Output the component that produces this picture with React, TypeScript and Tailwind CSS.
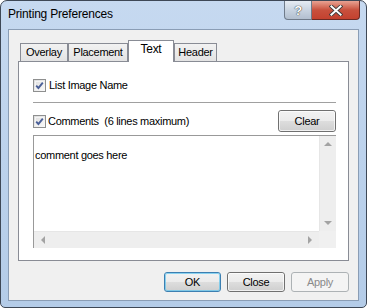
function Check() {
  return (
    <span className="relative flex size-[13px] shrink-0 items-center justify-center border border-[#8e8f8f] bg-gradient-to-br from-[#dcdcdc] to-[#fbfbfb]">
      <span className="absolute inset-[1px] border border-[#f4f4f4]" />
      <svg viewBox="0 0 11 11" className="relative size-[11px]">
        <path d="M2.2 5.6 L4.4 8 L8.8 2.6" fill="none" stroke="#4a5f98" strokeWidth="1.9" />
      </svg>
    </span>
  );
}

function Btn({ label, w, primary, disabled, h = "h-[20px]" }: { label: string; w: string; primary?: boolean; disabled?: boolean; h?: string }) {
  if (disabled) {
    return (
      <div className={`${w} ${h} flex items-center justify-center rounded-[3px] border border-[#adb2b5] bg-[#f4f4f4] text-[#8a8a8a]`}>
        {label}
      </div>
    );
  }
  return (
    <div
      className={`${w} ${h} relative flex items-center justify-center rounded-[3px] border ${
        primary ? "border-[#3c7fb1]" : "border-[#707070]"
      } bg-[linear-gradient(#f2f2f2_0%,#ebebeb_50%,#dddddd_51%,#cfcfcf_100%)] text-black`}
    >
      <span
        className={`absolute inset-0 rounded-[2px] border ${primary ? "border-[#5ec4f0]/70" : "border-white/70"}`}
      />
      <span className="relative">{label}</span>
    </div>
  );
}

function Tab({ label, w, active }: { label: string; w: string; active?: boolean }) {
  if (active) {
    return (
      <div className={`${w} relative z-10 -mb-px flex h-[22px] justify-center border border-b-0 border-[#898c95] bg-white pt-[2px] text-[12px]`}>
        {label}
      </div>
    );
  }
  return (
    <div className={`${w} flex h-[18px] justify-center border border-b-0 border-[#898c95] bg-gradient-to-b from-[#f2f2f2] to-[#e3e3e3] pt-[2px]`}>
      {label}
    </div>
  );
}

export default function App() {
  return (
    <div className="h-[308px] w-[367px] bg-white text-[11px] leading-[13px] tracking-[-0.3px] text-black [font-family:'Liberation_Sans',Arial,sans-serif]">
      <div className="relative flex h-[308px] w-[367px] flex-col rounded-t-[7px] rounded-b-[5px] border border-[#3e4856] bg-gradient-to-b from-[#c6d9f0] via-[#bcd2ec] to-[#b4cce8] px-[7px] pb-[6px]">
        {/* title bar */}
        <div className="flex h-[28px] items-center pb-[1px] text-[12px] tracking-[-0.2px] text-black">
          Printing Preferences
        </div>
        <div className="absolute right-[6px] top-0 flex h-[19px]">
          <div className="flex w-[28px] items-center justify-center rounded-bl-[4px] border border-t-0 border-[#6f7b8a] bg-gradient-to-b from-[#e6ecf3] via-[#c9d4e1] to-[#b2bfcf]">
            <span className="text-[13px] font-bold leading-none text-white [text-shadow:0_0_1px_#333,0_0_1px_#333]">?</span>
          </div>
          <div className="flex w-[48px] items-center justify-center rounded-br-[4px] border border-l-0 border-t-0 border-[#6b2a24] bg-gradient-to-b from-[#e8a293] via-[#c8503d] to-[#c3412f]">
            <svg viewBox="0 0 14 12" className="h-[11px] w-[14px]">
              <path d="M2 1.5 L12 10.5 M12 1.5 L2 10.5" stroke="#3b3b3b" strokeWidth="4" strokeLinecap="square" />
              <path d="M2 1.5 L12 10.5 M12 1.5 L2 10.5" stroke="#ffffff" strokeWidth="2.2" strokeLinecap="square" />
            </svg>
          </div>
        </div>

        {/* client area */}
        <div className="flex flex-1 flex-col border border-[#8a9db5] bg-[#f0f0f0] px-[9px] pt-[10px]">
          <div className="ml-[2px] flex items-end">
            <Tab label="Overlay" w="w-[48px]" />
            <Tab label="Placement" w="w-[60px]" />
            <Tab label="Text" w="w-[46px]" active />
            <Tab label="Header" w="w-[43px]" />
          </div>

          <div className="flex h-[200px] flex-col border border-[#898c95] bg-white pl-[14px] pr-[12px] pt-[17px]">
            <div className="flex h-[13px] items-center gap-[3px]">
              <Check />
              <span>List Image Name</span>
            </div>
            <div className="mt-[10px] h-px bg-[#a0a0a0]" />
            <div className="mt-[7px] flex h-[22px] items-center">
              <Check />
              <span className="ml-[2px] flex-1 whitespace-pre">Comments  (6 lines maximum)</span>
              <Btn label="Clear" w="w-[58px]" h="h-[22px]" />
            </div>
            <div className="mt-[3px] grid h-[113px] grid-cols-[1fr_17px] grid-rows-[1fr_17px] border-l border-t border-[#999999]">
              <div className="pl-[1px] pt-[13px]">comment goes here</div>
              <div className="flex flex-col items-center justify-between border-l border-[#e6e6e6] bg-[#eeeeee] py-[6px]">
                <span className="size-0 border-x-[4px] border-b-[4px] border-x-transparent border-b-[#a3a3a3]" />
                <span className="size-0 border-x-[4px] border-t-[4px] border-x-transparent border-t-[#a3a3a3]" />
              </div>
              <div className="flex items-center justify-between border-t border-[#e6e6e6] bg-[#eeeeee] px-[7px]">
                <span className="size-0 border-y-[4px] border-r-[4px] border-y-transparent border-r-[#a3a3a3]" />
                <span className="size-0 border-y-[4px] border-l-[4px] border-y-transparent border-l-[#a3a3a3]" />
              </div>
              <div className="bg-[#f0f0f0]" />
            </div>
          </div>

          <div className="mt-[11px] flex justify-end gap-[6px]">
            <Btn label="OK" w="w-[57px]" primary />
            <Btn label="Close" w="w-[58px]" />
            <Btn label="Apply" w="w-[58px]" disabled />
          </div>
        </div>
      </div>
    </div>
  );
}
